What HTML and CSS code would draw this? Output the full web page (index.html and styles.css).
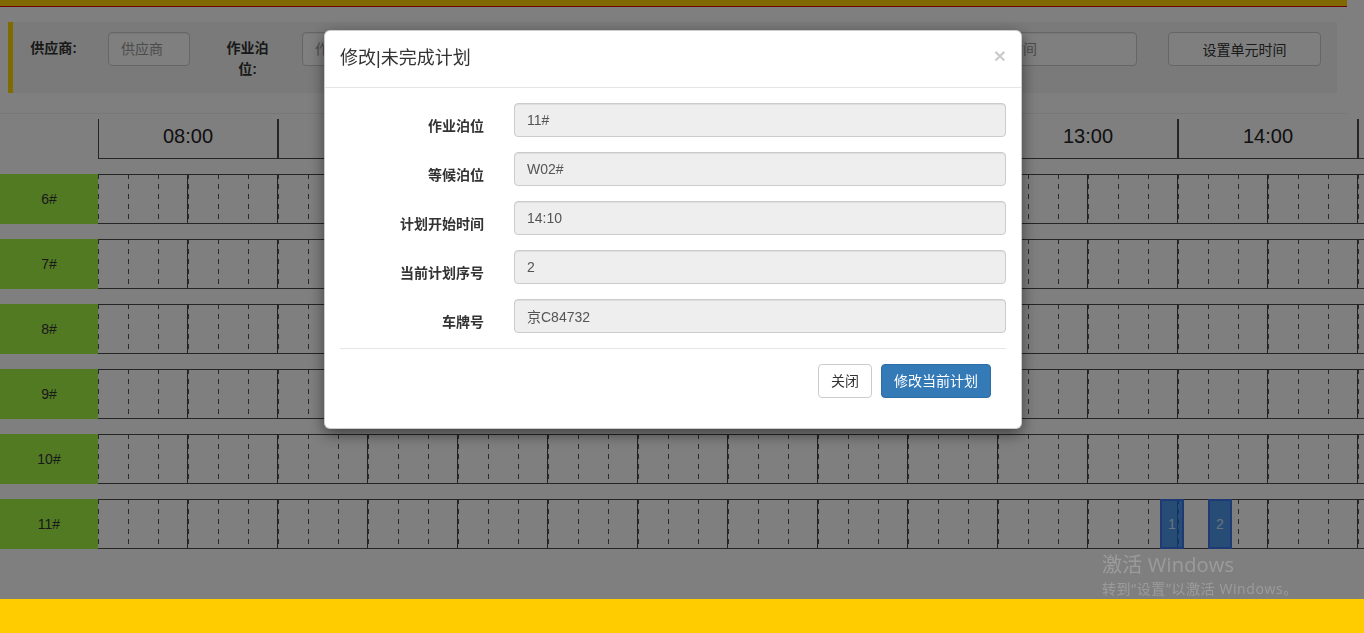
FILE: index.html
```html
<!DOCTYPE html>
<html lang="zh-CN">
<head>
<meta charset="utf-8">
<title>泊位计划</title>
<link rel="stylesheet" href="styles.css">
</head>
<body>
<div class="topbar"></div>

<div class="filter">
  <label class="f-label">供应商:</label>
  <input class="f-input" placeholder="供应商">
  <label class="f-label">作业泊位:</label>
  <input class="f-input" placeholder="作业泊位">
  <label class="f-label">开始时间:</label>
  <input class="f-input" placeholder="开始时间">
  <label class="f-label">结束时间:</label>
  <input class="f-input" placeholder="结束时间">
  <label class="f-label f-label-push">单元时间:</label>
  <input class="f-input f-input-wide" placeholder="单元时间">
  <button class="f-btn">设置单元时间</button>
</div>

<div class="timeline">
  <div class="time-head">
    <div class="hour">08:00</div>
    <div class="hour">09:00</div>
    <div class="hour">10:00</div>
    <div class="hour">11:00</div>
    <div class="hour">12:00</div>
    <div class="hour">13:00</div>
    <div class="hour">14:00</div>
    <div class="hour"></div>
  </div>
  <div class="berths">
    <div class="berth"><div class="berth-name">6#</div><div class="track"></div></div>
    <div class="berth"><div class="berth-name">7#</div><div class="track"></div></div>
    <div class="berth"><div class="berth-name">8#</div><div class="track"></div></div>
    <div class="berth"><div class="berth-name">9#</div><div class="track"></div></div>
    <div class="berth"><div class="berth-name">10#</div><div class="track"></div></div>
    <div class="berth"><div class="berth-name">11#</div>
      <div class="track">
        <div class="plan" style="left:1062px">1</div>
        <div class="plan" style="left:1110px">2</div>
      </div>
    </div>
  </div>
</div>

<div class="backdrop"></div>

<div class="modal-wrap">
  <div class="modal">
    <div class="modal-header">
      <h4 class="modal-title">修改|未完成计划</h4>
      <span class="close">×</span>
    </div>
    <div class="modal-body">
      <div class="form-group">
        <label class="control-label">作业泊位</label>
        <div class="control-col"><input class="form-control" value="11#" readonly></div>
      </div>
      <div class="form-group">
        <label class="control-label">等候泊位</label>
        <div class="control-col"><input class="form-control" value="W02#" readonly></div>
      </div>
      <div class="form-group">
        <label class="control-label">计划开始时间</label>
        <div class="control-col"><input class="form-control" value="14:10" readonly></div>
      </div>
      <div class="form-group">
        <label class="control-label">当前计划序号</label>
        <div class="control-col"><input class="form-control" value="2" readonly></div>
      </div>
      <div class="form-group">
        <label class="control-label">车牌号</label>
        <div class="control-col"><input class="form-control" value="京C84732" readonly></div>
      </div>
      <div class="modal-footer">
        <button class="btn btn-default">关闭</button>
        <button class="btn btn-primary">修改当前计划</button>
      </div>
    </div>
  </div>
</div>

<div class="footer-bar"></div>

<div class="watermark">
  <div class="wm-title">激活 Windows</div>
  <div class="wm-sub">转到“设置”以激活 Windows。</div>
</div>
</body>
</html>
```

FILE: styles.css
```css
* {
  box-sizing: border-box;
}

html, body {
  margin: 0;
  overflow: hidden;
}

body {
  padding-right: 17px;
  font-family: "Liberation Sans", "Noto Sans CJK SC", sans-serif;
  font-size: 14px;
  line-height: 1.42857;
  color: #333;
  background: #fff;
}

/* top bar */
.topbar {
  height: 7px;
  background: #ffd200;
  border-bottom: 1px solid #e00000;
}

/* filter panel */
.filter {
  display: flex;
  align-items: flex-start;
  height: 71px;
  margin: 15px 10px 0 8px;
  padding: 10px 0 0 14px;
  background: #f5f5f5;
  border-left: 5px solid #ffd700;
}

.f-label {
  width: 53px;
  margin-top: 6px;
  text-align: center;
  font-weight: bold;
  line-height: 21px;
}

.f-label-push {
  margin-left: 84px;
}

.f-input {
  width: 82px;
  height: 34px;
  margin: 0 31px 0 28px;
  padding: 6px 12px;
  font-family: "Liberation Sans", "Noto Sans CJK SC", sans-serif;
  font-size: 14px;
  color: #555;
  background: #fff;
  border: 1px solid #ccc;
  border-radius: 4px;
  box-shadow: inset 0 1px 1px rgba(0, 0, 0, .075);
}

.f-input::placeholder {
  color: #999;
}

.f-input-wide {
  width: 169px;
  margin-right: 31px;
}

.f-btn {
  width: 153px;
  height: 34px;
  padding: 6px 12px;
  font-family: "Liberation Sans", "Noto Sans CJK SC", sans-serif;
  font-size: 14px;
  color: #333;
  background: #fff;
  border: 1px solid #ccc;
  border-radius: 4px;
}

/* timeline */
.timeline {
  margin-top: 20px;
  padding-top: 5px;
  border-top: 1px solid #eee;
}

.time-head {
  display: flex;
  padding-left: 98px;
  width: max-content;
}

.hour {
  flex: 0 0 180px;
  height: 40px;
  border-left: 1px solid #4a4a4a;
  border-right: 1px solid #4a4a4a;
  border-bottom: 1px solid #4a4a4a;
  text-align: center;
  font-size: 20px;
  line-height: 35px;
  color: #222;
}

.berths {
  margin-top: 15px;
}

.berth {
  display: flex;
  width: max-content;
  height: 50px;
  margin-bottom: 15px;
}

.berth-name {
  width: 98px;
  text-align: center;
  line-height: 50px;
  color: #333;
  background: #a4f446;
}

.track {
  position: relative;
  width: 1440px;
  border-top: 1px solid #4a4a4a;
  border-bottom: 1px solid #4a4a4a;
  background-color: #fff;
  background-image:
    linear-gradient(to right, transparent 89px, #444 89px, #444 90px, transparent 90px),
    repeating-linear-gradient(to bottom, transparent 0, transparent 5px, #fff 5px, #fff 10px),
    linear-gradient(to right, #555 1px, transparent 1px);
  background-size: 90px 100%, 100% 100%, 30px 100%;
  background-repeat: repeat-x, no-repeat, repeat-x;
  background-origin: border-box;
}

.plan {
  position: absolute;
  top: -1px;
  bottom: -1px;
  width: 24px;
  border: 2px solid #3c72e8;
  background: rgba(20, 120, 230, .75);
  color: rgba(255, 255, 255, .75);
  text-align: center;
  line-height: 46px;
  font-size: 14px;
}

/* modal */
.backdrop {
  position: fixed;
  inset: 0;
  z-index: 1040;
  background: rgba(0, 0, 0, .5);
}

.modal-wrap {
  position: fixed;
  inset: 0;
  z-index: 1050;
  padding-right: 18px;
}

.modal {
  width: 698px;
  margin: 30px auto 0;
  background: #fff;
  border: 1px solid rgba(0, 0, 0, .2);
  border-radius: 6px;
  box-shadow: 0 5px 15px rgba(0, 0, 0, .5);
}

.modal-header {
  display: flex;
  justify-content: space-between;
  align-items: flex-start;
  padding: 15px;
  border-bottom: 1px solid #e5e5e5;
}

.modal-title {
  margin: 0;
  font-size: 18px;
  font-weight: normal;
  line-height: 1.42857;
  color: #333;
}

.close {
  margin-top: -1px;
  font-size: 21px;
  font-weight: bold;
  line-height: 1;
  color: #000;
  opacity: .2;
}

.modal-body {
  padding: 15px;
}

.form-group {
  display: flex;
  margin: 0 -15px 15px;
}

.control-label {
  flex: 0 0 25%;
  padding: 13px 15px 0;
  text-align: right;
  font-weight: bold;
  line-height: 20px;
}

.control-col {
  flex: 0 0 75%;
  padding: 0 15px;
}

.form-control {
  display: block;
  width: 100%;
  height: 34px;
  padding: 6px 12px;
  font-family: "Liberation Sans", "Noto Sans CJK SC", sans-serif;
  font-size: 14px;
  color: #555;
  background: #eee;
  border: 1px solid #ccc;
  border-radius: 4px;
  box-shadow: inset 0 1px 1px rgba(0, 0, 0, .075);
}

.modal-footer {
  padding: 15px;
  text-align: right;
  border-top: 1px solid #e5e5e5;
}

.btn {
  display: inline-block;
  padding: 6px 12px;
  font-family: "Liberation Sans", "Noto Sans CJK SC", sans-serif;
  font-size: 14px;
  line-height: 20px;
  border: 1px solid transparent;
  border-radius: 4px;
  vertical-align: middle;
}

.btn + .btn {
  margin-left: 5px;
}

.btn-default {
  color: #333;
  background: #fff;
  border-color: #ccc;
}

.btn-primary {
  color: #fff;
  background: #337ab7;
  border-color: #2e6da4;
}

/* bottom bar above backdrop */
.footer-bar {
  position: fixed;
  left: 0;
  right: 0;
  bottom: 0;
  z-index: 1060;
  height: 34px;
  background: #ffcc00;
}

/* OS watermark */
.watermark {
  position: fixed;
  left: 1102px;
  top: 552px;
  z-index: 1070;
  font-family: "Open Sans", "Noto Sans CJK SC", sans-serif;
  color: rgba(255, 255, 255, .22);
  white-space: nowrap;
}

.wm-title {
  font-size: 20px;
  line-height: 26px;
  letter-spacing: 0.2px;
}

.wm-sub {
  font-size: 14px;
  line-height: 22px;
  letter-spacing: 0.6px;
}
```
